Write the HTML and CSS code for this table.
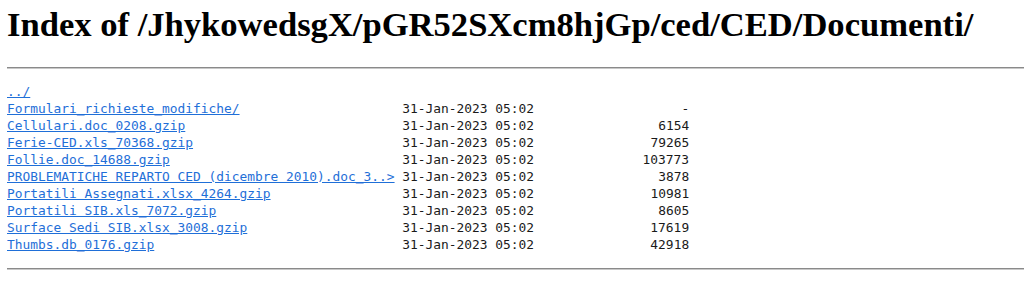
FILE: index.html
```html
<!DOCTYPE html>
<html>
<head>
<meta charset="utf-8">
<title>Index of /JhykowedsgX/pGR52SXcm8hjGp/ced/CED/Documenti/</title>
<link rel="stylesheet" href="styles.css">
</head>
<body class="page">
<h1 class="title">Index of /JhykowedsgX/pGR52SXcm8hjGp/ced/CED/Documenti/</h1>
<hr class="rule rule-top">
<pre class="listing"><a href="#">../</a>
<a href="#">Formulari_richieste_modifiche/</a>                     31-Jan-2023 05:02                   -
<a href="#">Cellulari.doc_0208.gzip</a>                            31-Jan-2023 05:02                6154
<a href="#">Ferie-CED.xls_70368.gzip</a>                           31-Jan-2023 05:02               79265
<a href="#">Follie.doc_14688.gzip</a>                              31-Jan-2023 05:02              103773
<a href="#">PROBLEMATICHE REPARTO CED (dicembre 2010).doc_3..&gt;</a> 31-Jan-2023 05:02                3878
<a href="#">Portatili Assegnati.xlsx_4264.gzip</a>                 31-Jan-2023 05:02               10981
<a href="#">Portatili SIB.xls_7072.gzip</a>                        31-Jan-2023 05:02                8605
<a href="#">Surface Sedi SIB.xlsx_3008.gzip</a>                    31-Jan-2023 05:02               17619
<a href="#">Thumbs.db_0176.gzip</a>                                31-Jan-2023 05:02               42918
</pre>
<hr class="rule rule-bottom">
</body>
</html>
```
FILE: styles.css
```css
html, body {
  background: #fff;
}
.page {
  margin: 0 0 8px 7px;
  color: #000;
}
.title {
  font-family: "Liberation Serif", "Times New Roman", serif;
  font-weight: bold;
  font-size: 34.6px;
  line-height: 41px;
  margin: 4px 0 0 0;
  color: #000;
}
.rule {
  border: 0;
  border-top: 1px solid #8a8a8a;
  border-bottom: 1px solid #c8c8c8;
  height: 0;
  margin: 0;
}
.rule-top {
  margin-top: 22px;
}
.listing {
  font-family: "DejaVu Sans Mono", "Liberation Mono", monospace;
  font-size: 12.88px;
  line-height: 17px;
  color: #1a1a1a;
  margin: 14px 0 15px 0;
}
.listing a {
  color: #1f6fd8;
  text-decoration: underline;
}
```
